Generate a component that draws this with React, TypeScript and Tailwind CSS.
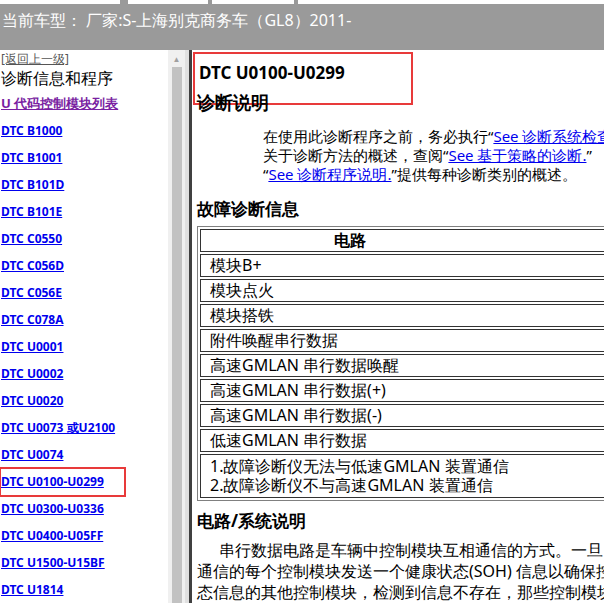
const links = [
  'DTC B1000', 'DTC B1001', 'DTC B101D', 'DTC B101E', 'DTC C0550', 'DTC C056D', 'DTC C056E',
  'DTC C078A', 'DTC U0001', 'DTC U0002', 'DTC U0020', 'DTC U0073 或U2100', 'DTC U0074',
  'DTC U0100-U0299', 'DTC U0300-U0336', 'DTC U0400-U05FF', 'DTC U1500-U15BF', 'DTC U1814',
];

const rows = [
  '模块B+', '模块点火', '模块搭铁', '附件唤醒串行数据', '高速GMLAN 串行数据唤醒',
  '高速GMLAN 串行数据(+)', '高速GMLAN 串行数据(-)', '低速GMLAN 串行数据',
];

export default function App() {
  return (
    <div className="w-[604px] h-[603px] overflow-hidden flex flex-col bg-white font-[family-name:'Liberation_Serif','Noto_Sans_CJK_SC',serif]">
      {/* header */}
      <div className="h-[50px] bg-[#9a9a9a] shrink-0">
        <div className="flex gap-[4px] h-[4px]">
          <div className="w-[120px] bg-white" />
          <div className="w-[80px] bg-white ml-[4px]" />
          <div className="w-[82px] bg-white" />
          <div className="flex-1 bg-white" />
        </div>
        <div className="pl-[2px] pt-[6px] text-[16px] leading-[20px] text-white font-[family-name:'Liberation_Sans','Noto_Sans_CJK_SC',sans-serif]">
          当前车型： 厂家:S-上海别克商务车（GL8）2011-
        </div>
      </div>

      <div className="flex flex-1 min-h-0">
        {/* sidebar */}
        <div className="w-[168px] shrink-0 pt-[2px] pl-[1px] overflow-hidden">
          <div className="text-[12px] leading-[14px] text-[#555] underline">[返回上一级]</div>
          <div className="text-[16px] leading-[22px] text-black mt-[1px]">诊断信息和程序</div>
          <div className="text-[13px] leading-[16px] mt-[6px] font-bold text-[#7a1fa2] underline">U 代码控制模块列表</div>
          <div className="flex flex-col mt-[6px]">
            {links.map((l) => (
              <div key={l} className="h-[27px] flex items-center">
                <span
                  className={`text-[12px] font-bold text-[#0000ee] underline ${
                    l === 'DTC U0100-U0299' ? 'outline-2 outline-[#e83a3a] pr-[20px] py-[4px]' : ''
                  }`}
                >
                  {l}
                </span>
              </div>
            ))}
          </div>
        </div>
        {/* scrollbar */}
        <div className="w-[17px] shrink-0 bg-[#f0f0f0] flex flex-col items-center">
          <div className="h-[17px] flex items-center text-[#a0a0a0] text-[8px]">▲</div>
          <div className="w-[10px] flex-1 bg-[#c2c2c2]" />
        </div>
        <div className="w-[4px] shrink-0 bg-[#e0e0e0]" />
        <div className="w-[3px] shrink-0 bg-[#404040]" />

        {/* content */}
        <div className="flex-1 min-w-0 overflow-hidden pl-[5px] pt-[2px]">
          <div className="border-2 border-[#e83a3a] w-[220px] h-[53px] -ml-[4px] pl-[4px] pt-[9px]">
            <div className="text-[17px] font-bold leading-[20px] text-black">DTC U0100-U0299</div>
          </div>
          <div className="text-[18px] font-bold leading-[22px] -mt-[14px]">诊断说明</div>
          <div className="pl-[66px] mt-[14px] text-[15px] leading-[19px] whitespace-nowrap">
            <div>在使用此诊断程序之前，务必执行“<span className="text-[#0000ee] underline">See 诊断系统检查</span></div>
            <div>关于诊断方法的概述，查阅“<span className="text-[#0000ee] underline">See 基于策略的诊断.</span>”</div>
            <div>“<span className="text-[#0000ee] underline">See 诊断程序说明.</span>”提供每种诊断类别的概述。</div>
          </div>
          <div className="mt-[14px] text-[17px] font-bold leading-[22px]">故障诊断信息</div>
          <div className="mt-[6px] border border-[#808080] p-[2px] w-[440px] flex flex-col gap-[2px] text-[16px] leading-[19px]">
            <div className="border border-[#333] h-[23px] flex items-center justify-center font-bold">
              <span className="ml-[-135px]">电路</span>
            </div>
            {rows.map((r) => (
              <div key={r} className="border border-[#333] h-[23px] flex items-center pl-[9px]">{r}</div>
            ))}
            <div className="border border-[#333] h-[44px] flex flex-col justify-center pl-[9px]">
              <div>1.故障诊断仪无法与低速GMLAN 装置通信</div>
              <div>2.故障诊断仪不与高速GMLAN 装置通信</div>
            </div>
          </div>
          <div className="mt-[9px] text-[17px] font-bold leading-[22px]">电路/系统说明</div>
          <div className="mt-[8px] text-[16px] leading-[21px] whitespace-nowrap">
            <div className="pl-[22px]">串行数据电路是车辆中控制模块互相通信的方式。一旦</div>
            <div>通信的每个控制模块发送一个健康状态(SOH) 信息以确保控</div>
            <div>态信息的其他控制模块，检测到信息不存在，那些控制模块</div>
          </div>
        </div>
      </div>
    </div>
  );
}
